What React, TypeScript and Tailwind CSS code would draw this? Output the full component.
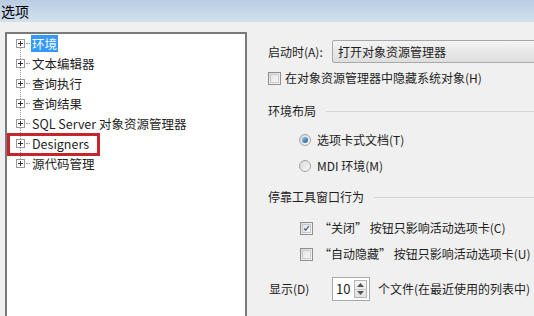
const font = "font-['Microsoft_YaHei','Noto_Sans_CJK_SC',sans-serif]";

const treeItems = ['环境', '文本编辑器', '查询执行', '查询结果', 'SQL Server 对象资源管理器', 'Designers', '源代码管理'];

function PlusBox() {
  return (
    <span className="relative z-10 flex h-[9px] w-[9px] shrink-0 items-center justify-center border border-[#9a9a9a] bg-white">
      <svg width="7" height="7" viewBox="0 0 7 7">
        <path d="M1 3.5h5M3.5 1v5" stroke="#333" strokeWidth="1" />
      </svg>
    </span>
  );
}

function Checkbox({ checked }: { checked?: boolean }) {
  return (
    <span className="flex h-[13px] w-[13px] shrink-0 items-center justify-center border border-[#8f8f8f] bg-gradient-to-br from-[#dcdcdc] to-[#fbfbfb]">
      <span className="flex h-[9px] w-[9px] items-center justify-center border border-[#c8c8c8] bg-gradient-to-br from-[#e4e4e4] to-[#f8f8f8]">
        {checked && (
          <svg width="9" height="9" viewBox="0 0 9 9">
            <path d="M1.5 4.5l2 2.2L7.5 1.5" stroke="#4a5f97" strokeWidth="1.6" fill="none" />
          </svg>
        )}
      </span>
    </span>
  );
}

function Radio({ checked }: { checked?: boolean }) {
  return (
    <span className="flex h-[12px] w-[12px] shrink-0 items-center justify-center rounded-full border border-[#a3a3a3] bg-gradient-to-br from-[#d8d8d8] to-[#fafafa]">
      {checked && <span className="h-[6px] w-[6px] rounded-full bg-gradient-to-br from-[#8ccbf2] to-[#175c9b]" />}
    </span>
  );
}

function Heading({ text }: { text: string }) {
  return (
    <div className="flex h-[20px] items-center">
      <span>{text}</span>
      <span className="ml-[10px] h-px flex-1 bg-[#d5d5d5]" />
    </div>
  );
}

export default function App() {
  return (
    <div className={`h-[316px] w-[534px] overflow-hidden bg-[#f0f0f0] text-[12px] text-[#1e1e1e] ${font}`}>
      {/* title bar */}
      <div className="flex h-[22px] items-center bg-gradient-to-b from-[#b9cde2] to-[#d3e1ee] pl-[1px] text-[14px] text-black">
        选项
      </div>

      <div className="flex pt-[10px]">
        {/* tree */}
        <div className="ml-[5px] h-[300px] w-[242px] shrink-0 border-2 border-b-0 border-[#7a7a7a] bg-white">
          <div className="relative -mt-[1px]">
            <div className="absolute left-[13px] top-[10px] h-[122px] border-l border-dotted border-[#9a9a9a]" />
            {treeItems.map((item, i) => (
              <div key={item} className="flex h-[20px] items-center pl-[9px]">
                <PlusBox />
                <span className="mx-[1px] w-[4px] border-t border-dotted border-[#9a9a9a]" />
                <span className={`px-[1px] text-[12.5px] leading-[17px] ${i === 0 ? 'bg-[#3399ff] text-white' : ''}`}>{item}</span>
              </div>
            ))}
            {/* highlight frame */}
            <div className="absolute left-[0px] top-[100px] h-[23px] w-[93px] border-[3px] border-[#c8242c]" />
          </div>
        </div>

        {/* options */}
        <div className="ml-[21px] flex-1 pt-[8px]">
          <div className="flex h-[23px] items-center">
            <span className="w-[64px]">启动时(A):</span>
            <div className="flex h-[23px] w-[260px] shrink-0 items-center rounded-[2px] border border-[#a8a8a8] bg-gradient-to-b from-[#f4f4f4] to-[#dedede] pl-[5px]">
              打开对象资源管理器
            </div>
          </div>

          <div className="mt-[5px] flex h-[20px] items-center">
            <Checkbox />
            <span className="ml-[4px]">在对象资源管理器中隐藏系统对象(H)</span>
          </div>

          <div className="mt-[13px]">
            <Heading text="环境布局" />
          </div>

          <div className="mt-[9px] flex h-[20px] items-center pl-[31px]">
            <Radio checked />
            <span className="ml-[6px]">选项卡式文档(T)</span>
          </div>
          <div className="mt-[6px] flex h-[20px] items-center pl-[31px]">
            <Radio />
            <span className="ml-[6px]">MDI 环境(M)</span>
          </div>

          <div className="mt-[11px]">
            <Heading text="停靠工具窗口行为" />
          </div>

          <div className="mt-[11px] flex h-[20px] items-center pl-[32px]">
            <Checkbox checked />
            <span className="ml-[6px]">“关闭” 按钮只影响活动选项卡(C)</span>
          </div>
          <div className="mt-[6px] flex h-[20px] items-center pl-[32px]">
            <Checkbox />
            <span className="ml-[6px]">“自动隐藏” 按钮只影响活动选项卡(U)</span>
          </div>

          <div className="mt-[13px] flex h-[24px] items-center">
            <span className="w-[64px] pl-[1px]">显示(D)</span>
            <div className="flex h-[24px] w-[38px] items-center border border-[#a8a8a8] bg-white pl-[3px]">
              <span className="text-[13px]">10</span>
              <div className="ml-auto mr-[2px] flex h-[18px] w-[13px] flex-col border border-[#b5b5b5] bg-gradient-to-b from-[#f6f6f6] to-[#e2e2e2]">
                <div className="flex flex-1 items-center justify-center border-b border-[#c8c8c8]">
                  <svg width="7" height="4" viewBox="0 0 7 4"><path d="M0 4L3.5 0L7 4z" fill="#555" /></svg>
                </div>
                <div className="flex flex-1 items-center justify-center">
                  <svg width="7" height="4" viewBox="0 0 7 4"><path d="M0 0L3.5 4L7 0z" fill="#555" /></svg>
                </div>
              </div>
            </div>
            <span className="ml-[8px]">个文件(在最近使用的列表中)</span>
          </div>
        </div>
      </div>
    </div>
  );
}
